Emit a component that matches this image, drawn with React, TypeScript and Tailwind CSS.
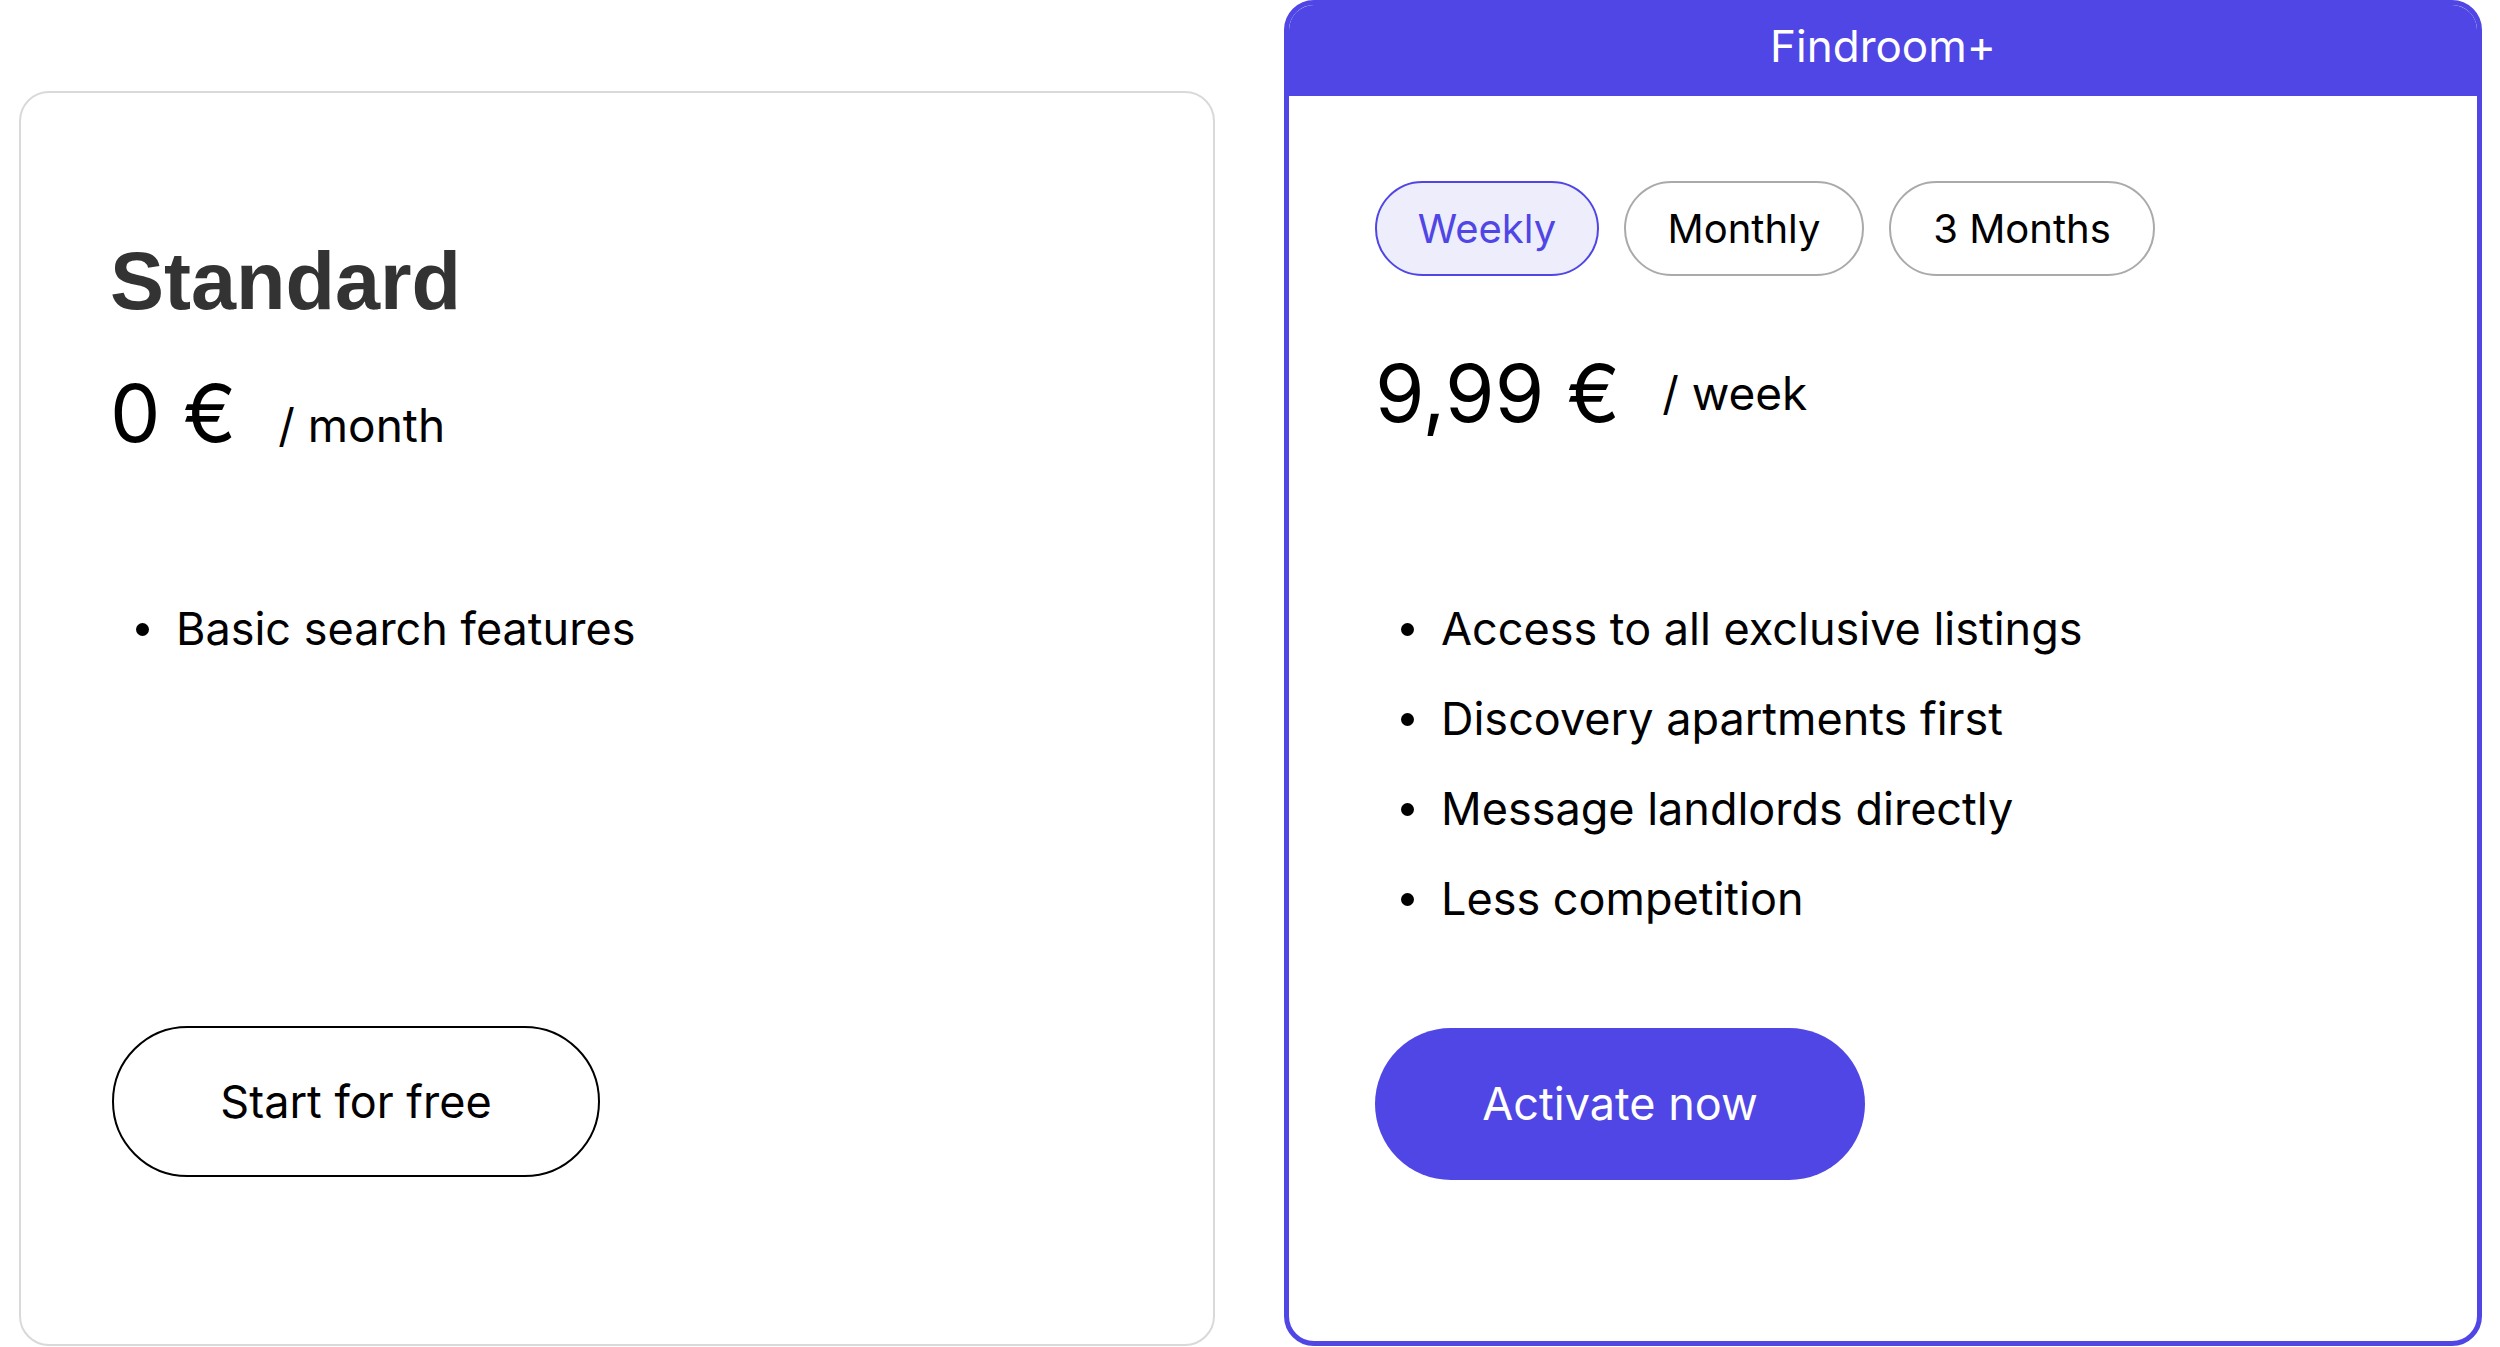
import React from 'react';

// Pricing comparison: free Standard plan vs. Findroom+ subscription

const plusFeatures = [
  'Access to all exclusive listings',
  'Discovery apartments first',
  'Message landlords directly',
  'Less competition',
];

const periods = [
  { label: 'Weekly', width: 'w-[224px]', active: true },
  { label: 'Monthly', width: 'w-[240px]', active: false },
  { label: '3 Months', width: 'w-[266px]', active: false },
];

const Feature = ({ text }: { text: string }) => (
  <li className="flex items-center h-[90px]">
    <span className="ml-[26px] mr-[27px] w-[13px] h-[13px] rounded-full bg-black shrink-0" />
    <span>{text}</span>
  </li>
);

export default function App() {
  return (
    <div
      className="w-[2500px] h-[1347px] overflow-hidden bg-white text-black"
      style={{ fontFamily: 'Inter, "Noto Sans", sans-serif' }}
    >
      <div className="flex items-start pl-[19px] gap-[69px]">
        {/* Standard */}
        <div className="mt-[91px] w-[1196px] h-[1255px] border-2 border-[#d9d9d9] rounded-[30px] pl-[89px] pt-[148px] flex flex-col">
          <h2
            className="text-[81px] leading-[80px] font-bold text-[#333333]"
            style={{ fontFamily: '"Liberation Sans", Arial, sans-serif' }}
          >
            Standard
          </h2>
          <div className="mt-[52px] flex items-baseline">
            <span className="text-[80px] leading-[80px]">0 €</span>
            <span className="ml-[42px] text-[46px] leading-[46px]">/ month</span>
          </div>
          <ul className="mt-[131px] text-[45px] leading-[90px]">
            <Feature text="Basic search features" />
          </ul>
          <button className="mt-[352px] ml-[2px] w-[488px] h-[151px] rounded-full border-2 border-black text-[45px] bg-white">
            Start for free
          </button>
        </div>

        {/* Findroom+ */}
        <div className="w-[1198px] h-[1346px] border-[5px] border-[#4f46e5] rounded-[30px] overflow-hidden flex flex-col">
          <div className="h-[91px] bg-[#4f46e5] text-white text-[44px] flex items-center justify-center pb-[10px]">
            Findroom+
          </div>
          <div className="pl-[86px] flex flex-col">
            <div className="mt-[85px] flex gap-[25px]">
              {periods.map(p => (
                <button
                  key={p.label}
                  className={
                    p.active
                      ? `${p.width} h-[95px] rounded-full border-2 border-[#4f46e5] bg-[#ededfc] text-[#4f46e5] text-[40px]`
                      : `${p.width} h-[95px] rounded-full border-2 border-[#aaaaaa] bg-white text-black text-[40px]`
                  }
                >
                  {p.label}
                </button>
              ))}
            </div>
            <div className="mt-[77px] flex items-center">
              <span className="text-[80px] leading-[80px]">9,99 €</span>
              <span className="ml-[42px] text-[46px] leading-[46px]">/ week</span>
            </div>
            <ul className="mt-[151px] text-[45px] leading-[90px]">
              {plusFeatures.map(f => (
                <Feature key={f} text={f} />
              ))}
            </ul>
            <button className="mt-[84px] w-[490px] h-[152px] rounded-full bg-[#4f46e5] text-white text-[45px]">
              Activate now
            </button>
          </div>
        </div>
      </div>
    </div>
  );
}
